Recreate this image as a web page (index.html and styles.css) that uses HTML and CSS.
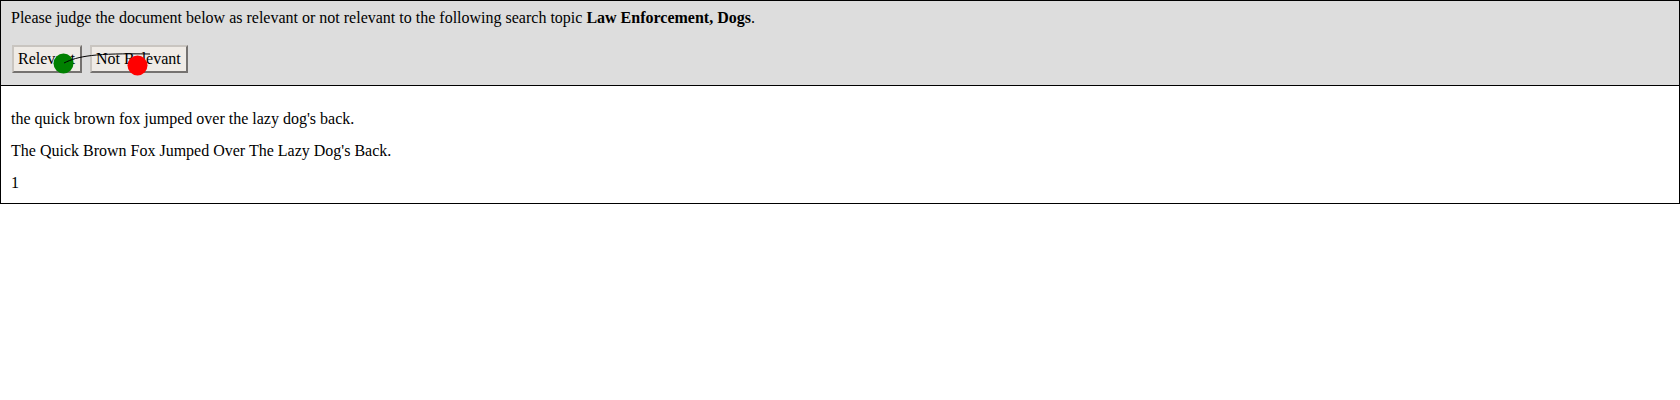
FILE: index.html
```html
<!DOCTYPE html>
<html>
<head>
<meta charset="utf-8">
<link rel="stylesheet" href="styles.css">
</head>
<body>
<div class="page">
  <div class="judge">
    <div class="prompt">Please judge the document below as relevant or not relevant to the following search topic <b>Law Enforcement, Dogs</b>.</div>
    <div class="actions">
      <button class="btn">Relevant</button>
      <button class="btn">Not Relevant</button>
    </div>
  </div>
  <div class="doc">
    <p>the quick brown fox jumped over the lazy dog's back.</p>
    <p>The Quick Brown Fox Jumped Over The Lazy Dog's Back.</p>
    <p>1</p>
  </div>
  <svg class="overlay" width="200" height="90" viewBox="0 0 200 90">
    <circle cx="63.5" cy="63.5" r="10" fill="#008000"/>
    <circle cx="137.5" cy="65.5" r="10" fill="#ff0000"/>
    <path d="M64 63 C 78 56, 95 53, 150 54" fill="none" stroke="#000" stroke-width="1"/>
  </svg>
</div>
</body>
</html>
```
FILE: styles.css
```css
html, body {
  margin: 0;
  padding: 0;
  background: #fff;
}
body {
  font-family: "Liberation Serif", "Times New Roman", serif;
  font-size: 16px;
  color: #000;
}
.page {
  position: relative;
}
.judge {
  background: #dddddd;
  border: 1px solid #000;
  padding: 8px 10px 12px;
}
.prompt {
  line-height: 18px;
}
.actions {
  display: flex;
  gap: 8px;
  margin-top: 18px;
  padding-left: 1px;
}
.btn {
  font-family: "Liberation Serif", "Times New Roman", serif;
  font-size: 16px;
  line-height: 18px;
  color: #000;
  background: #efebe6;
  border: 2px outset #c9c5c0;
  border-radius: 0;
  padding: 3px 5px 3px 4px;
  margin: 0;
}
.doc {
  border: 1px solid #000;
  border-top: none;
  padding: 10px 10px 11px;
}
.doc p {
  margin: 14px 0 0;
  line-height: 18px;
}
.overlay {
  position: absolute;
  left: 0;
  top: 0;
  pointer-events: none;
}
```
